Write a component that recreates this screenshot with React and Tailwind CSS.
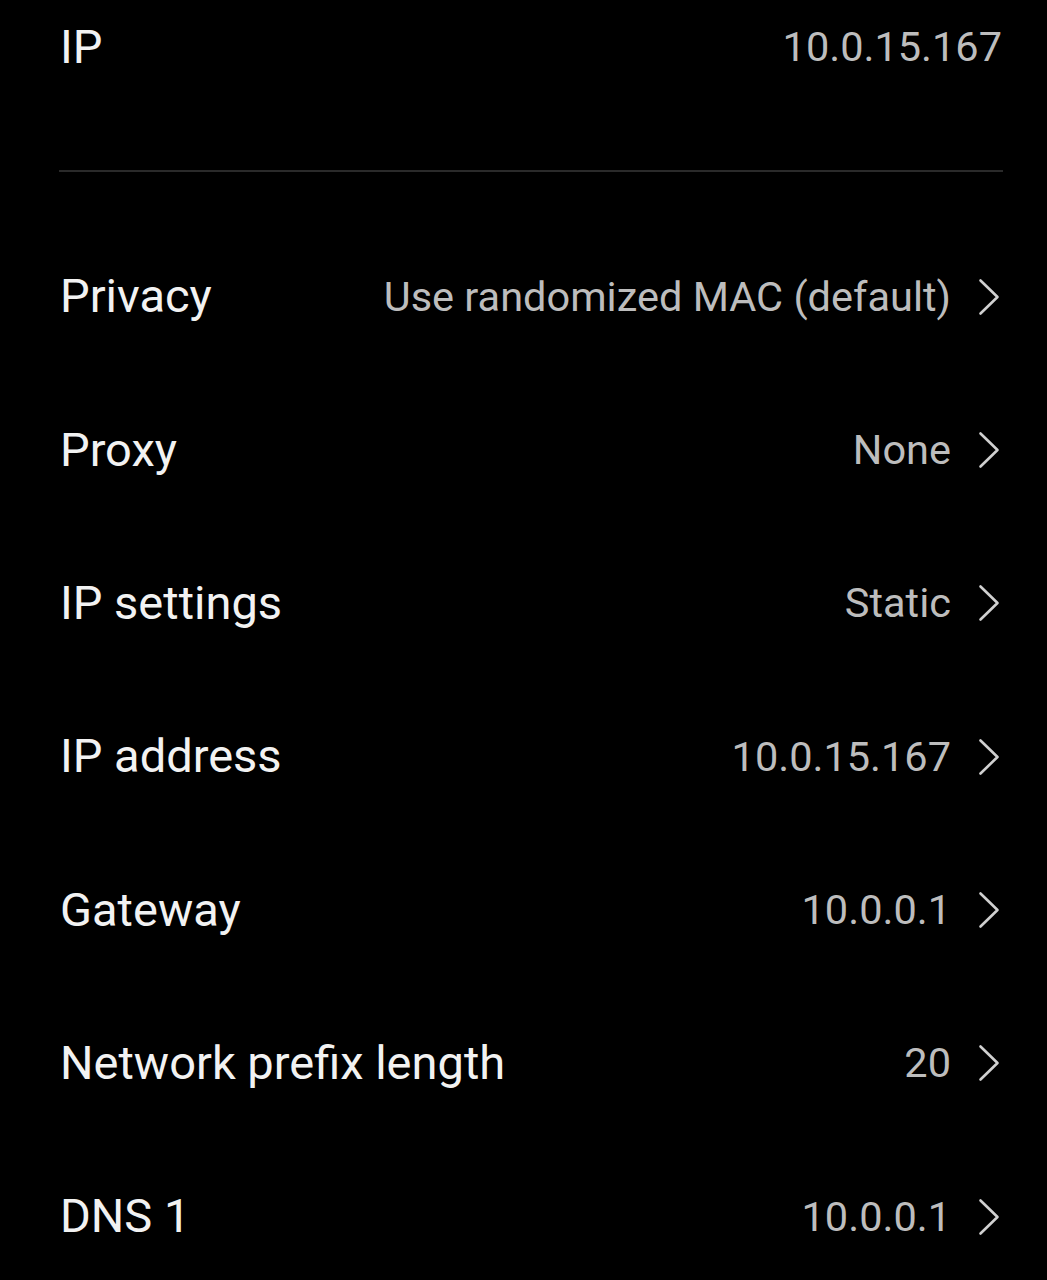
import React from "react";

const rows = [
  ["Privacy", "Use randomized MAC (default)"],
  ["Proxy", "None"],
  ["IP settings", "Static"],
  ["IP address", "10.0.15.167"],
  ["Gateway", "10.0.0.1"],
  ["Network prefix length", "20"],
  ["DNS 1", "10.0.0.1"],
];

function Chevron() {
  return (
    <svg width="24" height="38" viewBox="0 0 24 38" className="shrink-0">
      <path d="M3.5 2.5 L20.5 19 L3.5 35.5" fill="none" stroke="#d0d0d0" strokeWidth="2.6" strokeLinecap="round" strokeLinejoin="round" />
    </svg>
  );
}

export default function App() {
  return (
    <div className="bg-black w-[1047px] h-[1280px] overflow-hidden" style={{ fontFamily: "Roboto, 'Noto Sans', sans-serif" }}>
      <div className="flex items-center justify-between h-[94px] pl-[60px] pr-[45px]">
        <span className="text-[47px] text-[#f2f2f2]">IP</span>
        <span className="text-[41.5px] text-[#bdbdbd]">10.0.15.167</span>
      </div>
      <div className="h-[76px]" />
      <div className="ml-[59px] mr-[44px] h-[2px] bg-[#2a2a2a]" />
      <div className="h-[48px]" />
      {rows.map(([label, value]) => (
        <div key={label} className="flex items-center justify-between h-[153.33px] pl-[60px] pr-[46px]">
          <span className="text-[47px] text-[#f2f2f2] whitespace-nowrap">{label}</span>
          <div className="flex items-center gap-[26px]">
            <span className="text-[41.5px] text-[#bdbdbd] whitespace-nowrap">{value}</span>
            <Chevron />
          </div>
        </div>
      ))}
    </div>
  );
}
